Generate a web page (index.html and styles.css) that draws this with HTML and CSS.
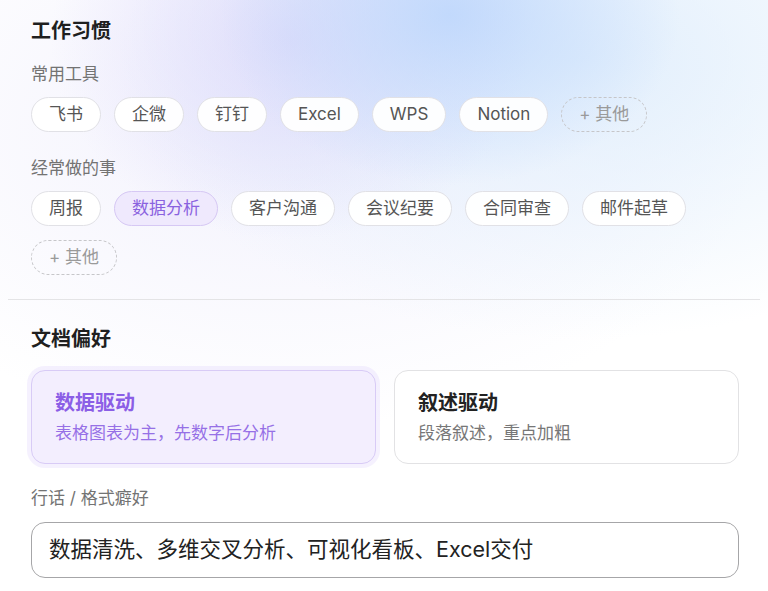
FILE: index.html
```html
<!DOCTYPE html>
<html lang="zh">
<head>
<meta charset="utf-8">
<link rel="stylesheet" href="styles.css">
</head>
<body>
<div class="page">
  <section class="habits">
    <h2 class="title">工作习惯</h2>
    <div class="label label-first">常用工具</div>
    <div class="chips">
      <span class="chip">飞书</span>
      <span class="chip">企微</span>
      <span class="chip">钉钉</span>
      <span class="chip">Excel</span>
      <span class="chip">WPS</span>
      <span class="chip">Notion</span>
      <span class="chip chip-add">+ 其他</span>
    </div>
    <div class="label">经常做的事</div>
    <div class="chips">
      <span class="chip">周报</span>
      <span class="chip chip-on">数据分析</span>
      <span class="chip">客户沟通</span>
      <span class="chip">会议纪要</span>
      <span class="chip">合同审查</span>
      <span class="chip">邮件起草</span>
      <span class="chip chip-add">+ 其他</span>
    </div>
  </section>
  <hr class="divider">
  <section class="docs">
    <h2 class="title">文档偏好</h2>
    <div class="cards">
      <div class="card card-on">
        <div class="card-title">数据驱动</div>
        <div class="card-sub">表格图表为主，先数字后分析</div>
      </div>
      <div class="card">
        <div class="card-title">叙述驱动</div>
        <div class="card-sub">段落叙述，重点加粗</div>
      </div>
    </div>
    <div class="label label-input">行话 / 格式癖好</div>
    <div class="input">数据清洗、多维交叉分析、可视化看板、Excel交付</div>
  </section>
</div>
</body>
</html>
```
FILE: styles.css
```css
* { box-sizing: border-box; }
html, body { margin: 0; padding: 0; }
body {
  width: 768px;
  height: 591px;
  overflow: hidden;
  font-family: "Inter", "Noto Sans CJK SC", sans-serif;
  color: #222;
  background:
    radial-gradient(ellipse 230px 170px at 450px 15px, rgba(190, 215, 252, 0.9), rgba(190, 215, 252, 0) 100%),
    radial-gradient(ellipse 240px 200px at 290px 40px, rgba(216, 212, 250, 0.7), rgba(216, 212, 250, 0) 100%),
    radial-gradient(ellipse 460px 280px at 580px 60px, rgba(224, 238, 252, 0.95), rgba(224, 238, 252, 0) 100%),
    radial-gradient(ellipse 480px 300px at 280px 130px, rgba(238, 237, 252, 0.75), rgba(238, 237, 252, 0) 100%),
    #ffffff;
}
.page { display: flex; flex-direction: column; }
.habits { padding: 18px 29px 0 31px; display: flex; flex-direction: column; }
.title {
  margin: 0;
  font-size: 20px;
  line-height: 26px;
  font-weight: 700;
  color: #1f1f1f;
}
.label {
  font-size: 17px;
  line-height: 22px;
  color: #737373;
  margin-top: 25px;
  margin-bottom: 12px;
}
.label-first { margin-top: 19px; }
.chips { display: flex; flex-wrap: wrap; gap: 14px 13px; }
.chip {
  height: 35px;
  padding: 0 17px;
  border: 1px solid #e1e1e6;
  border-radius: 18px;
  background: rgba(255, 255, 255, 0.94);
  font-size: 17px;
  line-height: 33px;
  color: #555;
  white-space: nowrap;
}
.chip-on {
  background: #efe9fd;
  border-color: #d6c8f4;
  color: #8a62df;
}
.chip-add {
  background: transparent;
  border: 1.5px dashed #c6c6c9;
  color: #9a9a9a;
  line-height: 32px;
}
.divider {
  margin: 24px 8px 0 8px;
  border: 0;
  border-top: 1px solid #e4e4e6;
  height: 0;
}
.docs { padding: 26px 29px 0 31px; display: flex; flex-direction: column; }
.cards {
  margin-top: 18px;
  display: grid;
  grid-template-columns: 1fr 1fr;
  gap: 18px;
}
.card {
  height: 94px;
  padding: 19px 23px 0 23px;
  border: 1px solid #e2e2e4;
  border-radius: 14px;
  background: #fff;
}
.card-on {
  background: #f3eefe;
  border: 1.5px solid #d8cbf6;
  box-shadow: 0 0 0 4px rgba(214, 200, 250, 0.25);
}
.card-title {
  font-size: 20px;
  line-height: 26px;
  font-weight: 700;
  color: #222;
}
.card-sub {
  margin-top: 5px;
  font-size: 17px;
  line-height: 24px;
  color: #777;
}
.card-on .card-title { color: #8b5ee6; }
.card-on .card-sub { color: #9670e6; }
.label-input { margin-top: 23px; margin-bottom: 13px; }
.input {
  height: 56px;
  padding: 0 17px;
  border: 1.5px solid #a6a6a8;
  border-radius: 14px;
  background: #fff;
  font-size: 21.5px;
  line-height: 53px;
  color: #222;
}
```
